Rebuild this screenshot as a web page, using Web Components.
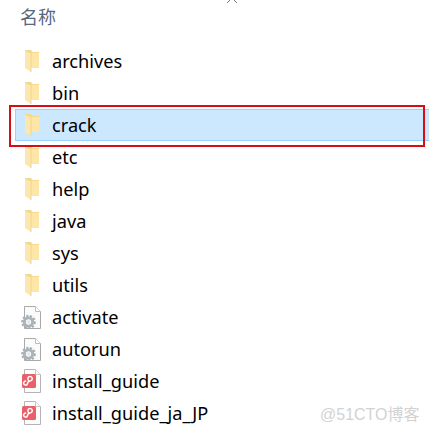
<!DOCTYPE html>
<html>
<head>
<meta charset="utf-8">
<style>
  html, body { margin: 0; padding: 0; background: #fff; overflow: hidden; }
  body { width: 429px; height: 430px; font-family: "Noto Sans", "Noto Sans CJK SC", sans-serif; }
</style>
</head>
<body>
<file-view>
  <file-row type="folder">archives</file-row>
  <file-row type="folder">bin</file-row>
  <file-row type="folder" selected>crack</file-row>
  <file-row type="folder">etc</file-row>
  <file-row type="folder">help</file-row>
  <file-row type="folder">java</file-row>
  <file-row type="folder">sys</file-row>
  <file-row type="folder">utils</file-row>
  <file-row type="script">activate</file-row>
  <file-row type="script">autorun</file-row>
  <file-row type="pdf">install_guide</file-row>
  <file-row type="pdf">install_guide_ja_JP</file-row>
</file-view>
<script>
"use strict";
const icons = {
  folder: `<svg width="24" height="24" viewBox="0 0 24 24">
    <path d="M7 1h6l1.500 2H21v16H7z" fill="#f7d987"/>
    <path d="M13 4h8v15h-8z" fill="#fde6a8"/>
    <path d="M7 1.500l6 2.500v19l-5.500-3.500L7 19z" fill="#fbe7b0"/>
    <path d="M7.500 1.500L13 4v19" fill="none" stroke="#f3d489" stroke-width="1"/>
  </svg>`,
  script: `<svg width="24" height="24" viewBox="0 0 24 24">
    <path d="M6.500 1.500h11l5 5v17h-16z" fill="#fbfbfb" stroke="#a9a9a9"/>
    <path d="M17.500 1.500v5h5" fill="#fff" stroke="#bdbdbd"/>
    <circle cx="10.500" cy="17" r="6.300" fill="none" stroke="#a3adb3" stroke-width="2" stroke-dasharray="2.200 1.600"/>
    <circle cx="10.500" cy="17" r="4.200" fill="none" stroke="#aab3b8" stroke-width="3"/>
    <circle cx="10.500" cy="17" r="1.800" fill="#e3e6e8"/>
  </svg>`,
  pdf: `<svg width="24" height="24" viewBox="0 0 24 24">
    <path d="M6.500 .500h11l5 5v18h-16z" fill="#fdfdfd" stroke="#b5b5b5"/>
    <path d="M17.500 .500v5h5" fill="#fff" stroke="#c6c6c6"/>
    <rect x="4" y="5" width="14" height="14" rx="1.500" fill="#ea5f68"/>
    <path d="M10.800 11.500a2.200 2.200 0 1 1 1.200.4c-1.500.1-2.200.8-2.400 2.100a2 2 0 1 1-2-1.900" fill="none" stroke="#fff" stroke-width="1.500" stroke-linecap="round"/>
  </svg>`
};

const rowTemplate = document.createElement('template');
rowTemplate.innerHTML = `
<style>
  :host {
    display: flex;
    align-items: center;
    height: 32px;
    margin-left: 15px;
    box-sizing: border-box;
    font-size: 18.200px;
    color: #000;
  }
  :host([selected]) .inner {
    background: #cce8ff;
    border: 1px solid #99d1ff;
    border-right: none;
  }
  .inner {
    display: flex;
    align-items: center;
    box-sizing: border-box;
    width: 100%;
    height: 32px;
    padding-left: 37px;
    position: relative;
  }
  .icon {
    position: absolute;
    left: 3px;
    top: 4px;
    width: 24px;
    height: 24px;
    display: flex;
    justify-content: center;
  }
  :host([selected]) .inner { padding-left: 36px; }
  :host([selected]) .icon { left: 2px; top: 3px; }
</style>
<div class="inner"><span class="icon"></span><slot></slot></div>
`;
class FileRow extends HTMLElement {
  constructor() {
    super();
    this.attachShadow({ mode: 'open' });
    this.shadowRoot.appendChild(rowTemplate.content.cloneNode(true));
  }
  connectedCallback() {
    this.shadowRoot.querySelector('.icon').innerHTML = icons[this.getAttribute('type')];
  }
}
window.customElements.define('file-row', FileRow);

const viewTemplate = document.createElement('template');
viewTemplate.innerHTML = `
<style>
  :host {
    display: block;
    position: relative;
    width: 429px;
    height: 430px;
    overflow: hidden;
  }
  .header {
    display: flex;
    align-items: center;
    height: 31px;
    margin-bottom: 14px;
    padding-left: 20px;
    font-size: 18px;
    color: #56677f;
  }
  .chevron {
    position: absolute;
    left: 226px;
    top: -4px;
  }
  .mark {
    position: absolute;
    left: 320px;
    top: 401px;
    font: 16px "Liberation Sans", "Noto Sans CJK SC", sans-serif;
    color: #d2d2d2;
  }
  .callout {
    position: absolute;
    left: 9px;
    top: 105px;
    width: 416px;
    height: 42px;
    box-sizing: border-box;
    border: 2px solid #d80c14;
  }
</style>
<div class="header">名称</div>
<svg class="chevron" width="12" height="8" viewBox="0 0 12 8"><path d="M1 7l5-5 5 5" fill="none" stroke="#777" stroke-width="1"/></svg>
<slot></slot>
<div class="callout"></div>
<div class="mark">@51CTO博客</div>
`;
class FileView extends HTMLElement {
  constructor() {
    super();
    this.attachShadow({ mode: 'open' });
    this.shadowRoot.appendChild(viewTemplate.content.cloneNode(true));
  }
}
window.customElements.define('file-view', FileView);
</script>
</body>
</html>
